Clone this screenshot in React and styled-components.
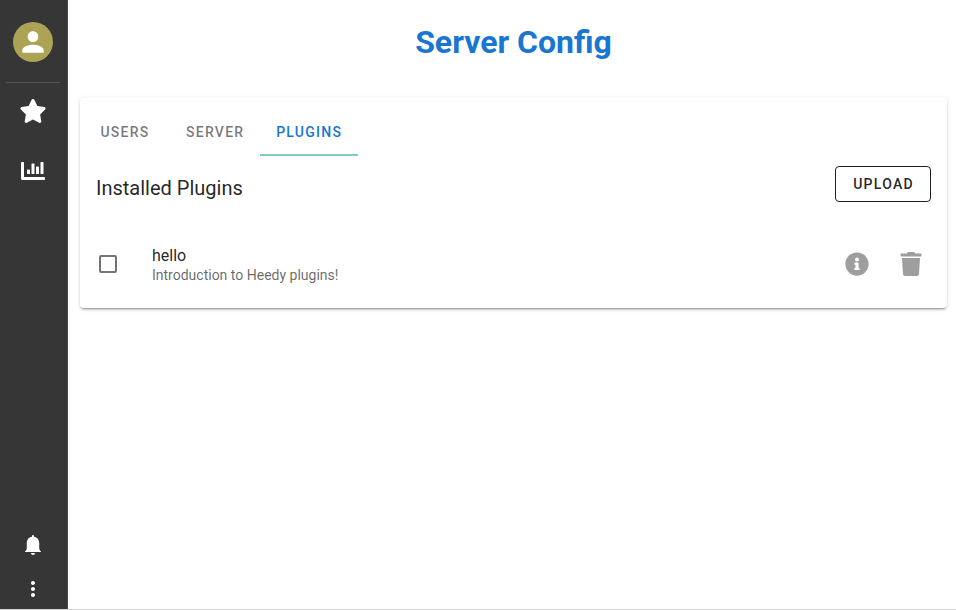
import React from "react";
import styled, { createGlobalStyle } from "styled-components";
import { FaStar, FaChartBar, FaInfoCircle, FaTrash } from "react-icons/fa";
import { MdPerson, MdMoreVert } from "react-icons/md";

const GlobalStyle = createGlobalStyle`
  *, *::before, *::after { box-sizing: border-box; }
  body {
    margin: 0;
    background: #fff;
    color: rgba(0, 0, 0, 0.87);
    font-family: Roboto, "Liberation Sans", sans-serif;
    overflow: hidden;
  }
  h1, h2, p { margin: 0; }
  button { font-family: inherit; background: none; border: 0; padding: 0; }
  svg { display: block; }
`;

const Shell = styled.div`
  display: flex;
  height: 610px;
  border-bottom: 1px solid #d4d4d4;
`;

const Sidebar = styled.nav`
  display: flex;
  flex-direction: column;
  align-items: center;
  width: 68px;
  padding: 22px 1px 0 0;
  background: #363636;
  border-right: 1px solid #4a4a4a;
  color: #fff;
`;

const Avatar = styled.div`
  display: grid;
  place-items: center;
  width: 40px;
  height: 40px;
  border-radius: 50%;
  background: #aca354;
`;

const Divider = styled.hr`
  width: 54px;
  height: 1px;
  margin: 20px 0 0;
  border: 0;
  background: #545454;
`;

const NavButton = styled.button`
  display: grid;
  place-items: center;
  width: 56px;
  height: ${(p) => p.$height}px;
  margin-top: ${(p) => p.$gap || 0};
  color: inherit;
`;

const StarIcon = styled(FaStar)`
  width: 28px;
  height: 24px;
`;

const Main = styled.main`
  flex: 1;
  padding: 0 9px 0 12px;
`;

const Title = styled.h1`
  height: 98px;
  padding-top: 18px;
  text-align: center;
  font-size: 32px;
  line-height: 48px;
  font-weight: 700;
  color: #1976d2;
`;

const Card = styled.section`
  height: 210px;
  border-radius: 4px;
  background: #fff;
  box-shadow: 0 3px 1px -2px rgba(0, 0, 0, 0.2), 0 2px 2px 0 rgba(0, 0, 0, 0.14),
    0 1px 5px 0 rgba(0, 0, 0, 0.12);
`;

const Tabs = styled.div`
  display: flex;
  height: 58px;
  padding-top: 10px;
`;

const Tab = styled.button`
  width: ${(p) => p.$width}px;
  height: 48px;
  padding-top: 2px;
  border-bottom: 2px solid ${(p) => (p.$active ? "#80cbc4" : "transparent")};
  color: ${(p) => (p.$active ? "#1976d2" : "rgba(0, 0, 0, 0.54)")};
  font-size: 14px;
  font-weight: 500;
  letter-spacing: 1.25px;
`;

const Header = styled.header`
  display: flex;
  justify-content: space-between;
  height: 64px;
  padding: 10px 16px 0;
`;

const Heading = styled.h2`
  padding-top: 6px;
  font-size: 20px;
  line-height: 32px;
  font-weight: 400;
`;

const UploadButton = styled.button`
  width: 96px;
  height: 36px;
  padding-left: 1px;
  border: 1px solid rgba(0, 0, 0, 0.87);
  border-radius: 4px;
  color: rgba(0, 0, 0, 0.87);
  font-size: 14px;
  font-weight: 500;
  letter-spacing: 1.25px;
`;

const PluginRow = styled.div`
  display: flex;
  align-items: center;
  height: 88px;
  padding: 0 24px 0 19px;
`;

const Checkbox = styled.span`
  width: 18px;
  height: 18px;
  border: 2px solid #757575;
  border-radius: 2px;
`;

const PluginText = styled.div`
  flex: 1;
  padding: 3px 0 0 35px;
`;

const PluginName = styled.p`
  font-size: 16px;
  line-height: 19px;
`;

const PluginDescription = styled.p`
  font-size: 14px;
  line-height: 20px;
  color: rgba(0, 0, 0, 0.6);
`;

const Actions = styled.div`
  display: flex;
  gap: 30px;
  color: #9e9e9e;
`;

const BellIcon = () => (
  <svg width="24" height="24" viewBox="0 0 24 24" fill="currentColor">
    <path d="M12 2a1 1 0 0 1 1 1v.8c3.100.5 5.200 3 5.200 6.200v4.500c0 2 .4 2.800 1.800 4V19H4v-.5c1.400-1.200 1.800-2 1.800-4V10c0-3.200 2.100-5.700 5.200-6.200V3a1 1 0 0 1 1-1zM10 20h4a2 2 0 0 1-4 0z" />
  </svg>
);

export default function App() {
  return (
    <>
      <GlobalStyle />
      <Shell>
        <Sidebar>
          <Avatar><MdPerson size={32} /></Avatar>
          <Divider />
          <NavButton $height={56} aria-label="Favorites"><StarIcon /></NavButton>
          <NavButton $height={56} $gap="4px" aria-label="Charts"><FaChartBar size={24} /></NavButton>
          <NavButton $height={48} $gap="auto" aria-label="Notifications"><BellIcon /></NavButton>
          <NavButton $height={40} aria-label="More"><MdMoreVert size={24} /></NavButton>
        </Sidebar>
        <Main>
          <Title>Server Config</Title>
          <Card>
            <Tabs>
              <Tab $width={90}>USERS</Tab>
              <Tab $width={90.4}>SERVER</Tab>
              <Tab $width={97.6} $active>PLUGINS</Tab>
            </Tabs>
            <Header>
              <Heading>Installed Plugins</Heading>
              <UploadButton>UPLOAD</UploadButton>
            </Header>
            <PluginRow>
              <Checkbox role="checkbox" aria-checked="false" />
              <PluginText>
                <PluginName>hello</PluginName>
                <PluginDescription>Introduction to Heedy plugins!</PluginDescription>
              </PluginText>
              <Actions>
                <FaInfoCircle size={24} />
                <FaTrash size={24} />
              </Actions>
            </PluginRow>
          </Card>
        </Main>
      </Shell>
    </>
  );
}
